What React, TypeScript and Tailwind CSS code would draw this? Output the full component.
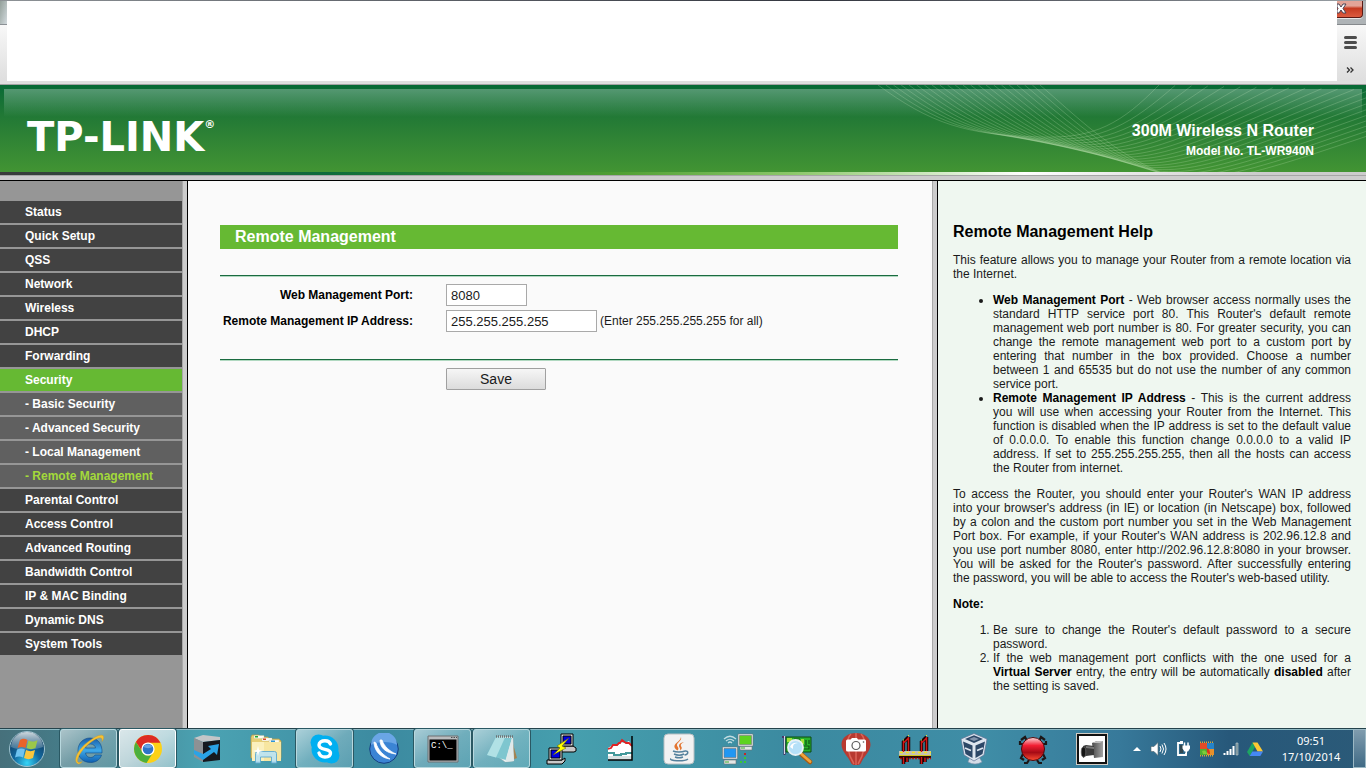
import type { ReactNode } from "react"
import { useState } from "react"
import clsx from "clsx"

interface MenuItem {
  label: string
  sub?: boolean
}

const menu: MenuItem[] = [
  { label: "Status" },
  { label: "Quick Setup" },
  { label: "QSS" },
  { label: "Network" },
  { label: "Wireless" },
  { label: "DHCP" },
  { label: "Forwarding" },
  { label: "Security" },
  { label: "Basic Security", sub: true },
  { label: "Advanced Security", sub: true },
  { label: "Local Management", sub: true },
  { label: "Remote Management", sub: true },
  { label: "Parental Control" },
  { label: "Access Control" },
  { label: "Advanced Routing" },
  { label: "Bandwidth Control" },
  { label: "IP & MAC Binding" },
  { label: "Dynamic DNS" },
  { label: "System Tools" },
]

function BrowserChrome() {
  return (
    <div className="flex h-[85px] shrink-0 flex-col border-b border-[#a3a3a3] bg-[#dfdfdf]">
      <div className="h-px bg-gradient-to-r from-[#8d9296] via-[#33363f] via-60% to-[#9aa0a5]" />
      <div className="flex h-20">
        <div className="flex w-[7px] flex-col">
          <div className="h-6 border-b border-[#8b9095] bg-gradient-to-br from-[#93a09a] to-[#d3dade]" />
          <div className="flex-1 bg-gradient-to-b from-[#f8f8f8] to-[#dedede]" />
        </div>
        <div className="flex-1 bg-white" />
        <div className="flex w-[29px] flex-col">
          <div className="h-6 border-b border-[#85898c] bg-[#aeb3b6] pr-[3px]">
            <button
              type="button"
              aria-label="Close"
              className="block h-[17px] w-full rounded-br border-r border-b border-[#5b1a14] bg-gradient-to-b from-[#e3a497] from-30% via-[#c5391f] via-45% to-[#dc5b3f] shadow-[0_1px_0_#e6e6e6]"
            >
              <svg viewBox="0 0 26 16" className="h-4 w-[26px]">
                <path d="M0 3h2l2 3 2-3h3L6 7.500l3 4.500H6L4 9l-2 3H0V9l1-1.500L0 6z" fill="#fff" stroke="#4a4555" strokeWidth="1" />
              </svg>
            </button>
          </div>
          <div className="flex flex-1 flex-col items-center bg-gradient-to-b from-[#f8f8f8] to-[#dedede] pr-1">
            <button type="button" aria-label="Menu" className="mt-[11px] ml-[2px]">
              <svg viewBox="0 0 13 14" className="h-[14px] w-[13px]">
                <path d="M1.500 1.500h10M1.500 6.500h10M1.500 11.500h10" stroke="#4d4d4d" strokeWidth="3" strokeLinecap="round" />
              </svg>
            </button>
            <button type="button" aria-label="More bookmarks" className="mt-4">
              <svg viewBox="0 0 8 8" className="h-2 w-2">
                <path d="M1 1.500l2.500 2.500L1 6.500M4.500 1.500L7 4 4.500 6.500" fill="none" stroke="#333" strokeWidth="1.300" />
              </svg>
            </button>
          </div>
        </div>
      </div>
    </div>
  )
}

// Ribbon of thin lines behind the model name
function Waves() {
  const count = 22
  const lines = Array.from({ length: count }, (_, i) => {
    const t = i / (count - 1)
    const mix = (a: number, b: number) => Math.round((a + (b - a) * t) * 10) / 10
    return `M${mix(18, 180)} 0C${mix(70, 215)} ${mix(38, 30)} ${mix(105, 250)} ${mix(50, 66)} ${mix(180, 304)} ${mix(52, 89)}C${mix(235, 360)} ${mix(54, 112)} ${mix(262, 450)} ${mix(38, 66)} ${mix(299, 640)} ${mix(0, 8)}`
  })
  return (
    <svg viewBox="0 0 506 87" className="absolute top-0 right-0 h-[87px] w-[506px]" aria-hidden="true">
      {lines.map((d) => (
        <path key={d} d={d} fill="none" stroke="#d5f0c8" strokeOpacity="0.220" strokeWidth="1" />
      ))}
    </svg>
  )
}

function Header() {
  return (
    <header className="shrink-0">
      <div className="relative flex h-[87px] items-center justify-between bg-gradient-to-b from-[#066a35] to-[#429433] pr-[52px] pl-[27px] text-white">
        <div className="absolute inset-x-1 top-1 h-7 bg-gradient-to-b from-white/30 to-transparent" />
        <Waves />
        <div className="relative flex items-start pt-4 font-['DejaVu_Sans'] font-bold">
          <span className="text-[40px] leading-9">TP-LINK</span>
          <span className="text-[11px] leading-3">®</span>
        </div>
        <div className="relative pt-6 text-right font-bold">
          <div className="text-base leading-5">300M Wireless N Router</div>
          <div className="text-xs leading-5">Model No. TL-WR940N</div>
        </div>
      </div>
      <div className="h-[3px] bg-[linear-gradient(90deg,#3a3a3a_0%,#0d6b3a_24%,#4f9e32_45%,#8cc76a_58%,#ffffff_75%,#cccccc_92%)]" />
      <div className="h-[6px] border-t border-b border-t-[#a6a6a6] border-b-black bg-[#cccccc]" />
    </header>
  )
}

function Divider() {
  return <div className="w-[6px] shrink-0 border-r border-l border-r-black border-l-[#a9a9a9] bg-[#cccccc]" />
}

function Sidebar() {
  return (
    <nav className="w-[182px] shrink-0 bg-[#969696] pt-5">
      <ul className="flex flex-col gap-[2px]">
        {menu.map((item) => (
          <li key={item.label}>
            <a
              href="#"
              className={clsx(
                "block h-[22px] pl-[25px] text-xs leading-[22px] font-bold",
                item.label === "Security" ? "bg-[#66b933]" : item.sub ? "bg-[#606060]" : "bg-[#424242]",
                item.label === "Remote Management" ? "text-[#a3d93a]" : "text-white",
              )}
            >
              {item.sub && "- "}
              {item.label}
            </a>
          </li>
        ))}
      </ul>
    </nav>
  )
}

function Rule() {
  return <div className="h-[2px] border-t border-[#1a6b40] bg-[#b0d8c0]" />
}

function RemoteManagement() {
  const [port, setPort] = useState("8080")
  const [ip, setIp] = useState("255.255.255.255")
  const inputClass = "h-[22px] border border-[#a9a9a9] bg-white px-1 text-[13px] leading-4 text-[#1a1a1a] outline-none"

  return (
    <main className="min-w-0 flex-1 bg-[#fafafa] px-8 pt-11">
      <form className="max-w-[678px]" onSubmit={(e) => e.preventDefault()}>
        <h1 className="mb-[26px] h-6 bg-[#66b933] pl-[15px] text-base leading-6 font-bold text-white">Remote Management</h1>
        <Rule />
        <div className="grid grid-cols-[193px_1fr] items-center gap-x-[33px] gap-y-1 pt-[7px] pb-[27px]">
          <label htmlFor="port" className="text-right text-xs font-bold whitespace-nowrap">
            Web Management Port:
          </label>
          <div className="flex">
            <input id="port" className={clsx(inputClass, "w-[81px]")} value={port} onChange={(e) => setPort(e.target.value)} />
          </div>
          <label htmlFor="ip" className="text-right text-xs font-bold whitespace-nowrap">
            Remote Management IP Address:
          </label>
          <div className="flex items-center gap-[3px]">
            <input id="ip" className={clsx(inputClass, "w-[151px]")} value={ip} onChange={(e) => setIp(e.target.value)} />
            <span className="text-xs text-[#1a1a1a]">(Enter 255.255.255.255 for all)</span>
          </div>
        </div>
        <Rule />
        <button
          type="submit"
          className="mt-[7px] ml-[226px] block h-[22px] w-[100px] rounded-[1px] border border-[#a0a0a0] bg-gradient-to-b from-[#f6f6f6] to-[#dcdcdc] text-sm leading-5 text-[#1a1a1a]"
        >
          Save
        </button>
      </form>
    </main>
  )
}

function Help() {
  return (
    <aside className="w-[428px] shrink-0 bg-[#eff7f0] px-[15px] pt-[41px] text-justify text-xs leading-[14px] text-[#1a1a1a]">
      <h2 className="mb-[11px] text-base leading-5 font-bold text-black">Remote Management Help</h2>
      <p className="mb-3">This feature allows you to manage your Router from a remote location via the Internet.</p>
      <ul className="mb-3 list-disc pl-10">
        <li>
          <b className="text-black">Web Management Port</b> - Web browser access normally uses the standard HTTP service port 80. This
          Router's default remote management web port number is 80. For greater security, you can change the remote management web port
          to a custom port by entering that number in the box provided. Choose a number between 1 and 65535 but do not use the number of
          any common service port.
        </li>
        <li>
          <b className="text-black">Remote Management IP Address</b> - This is the current address you will use when accessing your
          Router from the Internet. This function is disabled when the IP address is set to the default value of 0.0.0.0. To enable this
          function change 0.0.0.0 to a valid IP address. If set to 255.255.255.255, then all the hosts can access the Router from
          internet.
        </li>
      </ul>
      <p className="mb-3">
        To access the Router, you should enter your Router's WAN IP address into&nbsp;your browser's address (in IE) or location (in
        Netscape) box, followed by&nbsp;a&nbsp;colon and the custom port number you set in the Web Management Port&nbsp;box. For
        example, if your Router's WAN address is 202.96.12.8 and you&nbsp;use port number 8080, enter http://202.96.12.8:8080 in your
        browser. You&nbsp;will be asked for the Router's password. After successfully entering the&nbsp;password, you will be able to
        access the Router's web-based utility.
      </p>
      <p className="mb-3 font-bold text-black">Note:</p>
      <ol className="list-decimal pl-10">
        <li>Be sure to change the Router's default password to a secure password.</li>
        <li>
          If the web management port conflicts with the one used for a <b className="text-black">Virtual Server</b> entry, the entry
          will be automatically <b className="text-black">disabled</b> after the setting is saved.
        </li>
      </ol>
    </aside>
  )
}

function Icon({ children }: { children: ReactNode }) {
  return (
    <svg viewBox="0 0 32 32" className="size-8" aria-hidden="true">
      {children}
    </svg>
  )
}

function StartOrb() {
  return (
    <svg viewBox="0 0 38 38" className="size-[38px]" aria-hidden="true">
      <defs>
        <radialGradient id="orb" cx="50%" cy="90%" r="85%">
          <stop offset="0" stopColor="#35d5f7" />
          <stop offset="0.450" stopColor="#12689f" />
          <stop offset="1" stopColor="#123656" />
        </radialGradient>
        <linearGradient id="orbShine" x1="0" y1="0" x2="0" y2="1">
          <stop offset="0" stopColor="#eef6f8" stopOpacity="0.850" />
          <stop offset="1" stopColor="#b4cdd8" stopOpacity="0.250" />
        </linearGradient>
      </defs>
      <circle cx="19" cy="19" r="17.500" fill="url(#orb)" stroke="#9fc3cf" strokeWidth="1" />
      <path d="M3 17a16 15 0 0 1 32 0c-7 3-24 4-32 0z" fill="url(#orbShine)" />
      <path d="M12 10c3-2 5-1.500 7.500 0L17.500 18c-2.500-1.500-5-1.500-8 0z" fill="#e8632a" />
      <path d="M20.500 10.500c3 1.500 6 1.500 9-.500l-2 8c-3 1.500-6 1.500-9 0z" fill="#9bc84a" />
      <path d="M9 19.500c3-1.500 5.500-1.500 8 0l-2 8c-2.500-1.500-5-1.500-8 0z" fill="#6fc3f0" />
      <path d="M18 20c3 1.500 6 1.500 9 0l-2 8c-3 1.500-6 1.500-9 0z" fill="#fbc63d" />
    </svg>
  )
}

function IeIcon() {
  return (
    <Icon>
      <defs>
        <linearGradient id="ie" x1="0" y1="0" x2="0" y2="1">
          <stop offset="0" stopColor="#1a5da8" />
          <stop offset="0.500" stopColor="#3fa9e8" />
          <stop offset="1" stopColor="#0f5fb0" />
        </linearGradient>
      </defs>
      <path
        d="M29 20H12.500c.5 3 2.500 4.500 5 4.500 2 0 3.500-.8 4.500-2.500h6.500c-1.500 5-6 7.500-11 7.500C10.500 29.500 5 25 5 17.500 5 10 10.500 5 17 5c8 0 12.500 6 12 15zM12.500 15h10c-.3-2.500-2.300-4-5-4s-4.500 1.500-5 4z"
        fill="url(#ie)"
        stroke="#0d4a86"
        strokeWidth="0.600"
      />
      <path d="M5.500 31C0 29 3 19 13 10.500 21 3.500 29.500 0 30.500 3.500c.4 1.500-.3 3.500-1.500 5 .3-2 0-3.500-1.500-3.700C24 4 14 11 9 18c-4.500 6-6 11.500-3 11.500 1 0 2-.3 3-.8-1 1.300-2.300 2.300-3.500 2.300z" fill="#f7c232" stroke="#d79a17" strokeWidth="0.400" />
    </Icon>
  )
}

function ChromeIcon() {
  return (
    <Icon>
      <circle cx="16" cy="16" r="14" fill="#fcd116" />
      <path d="M3.900 9A14 14 0 0 1 28.500 9.800H16a6.300 6.300 0 0 0-5.700 8.800z" fill="#dd2b24" />
      <path d="M3.900 9A14 14 0 0 0 14.500 29.900l6.300-9.800a6.300 6.300 0 0 1-10.500-1z" fill="#4caf3d" />
      <circle cx="16" cy="16" r="6.600" fill="#fff" />
      <circle cx="16" cy="16" r="5.300" fill="#2f74c8" />
      <path d="M11.500 14a5 5 0 0 1 9 0c-3 1.500-6 1.500-9 0z" fill="#6aa2e2" />
    </Icon>
  )
}

function BoxArrowIcon() {
  return (
    <Icon>
      <path d="M3 5l9-3 17 2v3L12 9z" fill="#c3c6c8" />
      <path d="M3 5l9 4v20L3 24z" fill="#8d9194" />
      <path d="M12 9l17-2v20l-17 2z" fill="#16191f" />
      <path d="M3 17l9 4 8-5-3-3 11-2-2 11-3-3-11 8-9-6z" fill="#2aa3e6" />
    </Icon>
  )
}

function ExplorerIcon() {
  return (
    <Icon>
      <path d="M1 8V4l1-2h7l2 2h7l1 2h10l2 2v17H1z" fill="#e8cf75" stroke="#b89b45" strokeWidth="0.700" />
      <path d="M4 2.500h10v3H4zM12 5h10v3H12zM19 7h10v3H19z" fill="#fdfdf5" stroke="#c7ba8a" strokeWidth="0.300" />
      <path d="M5 3h3v1.500H5z" fill="#22a833" />
      <path d="M13 5.500h3V7h-3z" fill="#d94733" />
      <path d="M21 7.500h4V9h-4z" fill="#2b93d8" />
      <path d="M2 9h29v19H2z" fill="#f7e6a1" />
      <path d="M2 9h12v19H2z" fill="#fbf0bd" />
      <path d="M5.500 30v-9.500q0-2 2-2h17q2 0 2 2V30h-5v-6h-11v6z" fill="#b9e2f3" fillOpacity="0.900" stroke="#5da9cf" strokeWidth="0.900" />
      <path d="M8 13l1 4 4 1-4 1-1 4-1-4-4-1 4-1z" fill="#fff" />
    </Icon>
  )
}

function SkypeIcon() {
  return (
    <Icon>
      <circle cx="16" cy="16" r="13.500" fill="#00aff0" />
      <circle cx="9.500" cy="9.500" r="8" fill="#00aff0" />
      <circle cx="22.500" cy="22.500" r="8" fill="#00aff0" />
      <path d="M21.500 11c-1-2.500-3-3.300-5.500-3.300-3.500 0-6 1.700-6 4.300 0 6 11.500 2.800 11.500 8 0 2.700-2.300 4-5.500 4-3 0-5-1-6-4" fill="none" stroke="#fff" strokeWidth="3.400" strokeLinecap="round" />
    </Icon>
  )
}

function SwooshIcon() {
  return (
    <Icon>
      <circle cx="16" cy="16" r="14.300" fill="#3b84d4" stroke="#153f82" strokeWidth="1" />
      <path d="M3 12a13 13 0 0 1 26 0c-5-4-20-4-26 0z" fill="#6aa6e6" />
      <path d="M6 9c0 8 6 16 16 17-7-4-12-9-14-16zM12 7c0 8 6 13 16 14-7-3-12-8-14-14z" fill="#fff" stroke="#fff" strokeWidth="0.800" />
    </Icon>
  )
}

function CmdIcon() {
  return (
    <Icon>
      <path d="M1 3h30v26H1z" fill="#b9bcbe" stroke="#6c7073" strokeWidth="1" />
      <path d="M24 4.500h1.500M26.500 4.500H28M29 4.500h1" stroke="#4c4f51" />
      <path d="M2.500 6.500h27v21h-27z" fill="#000" />
      <text x="4" y="15" fill="#fff" fontSize="9" fontFamily="Liberation Mono, monospace">
        C:\_
      </text>
    </Icon>
  )
}

function NotepadIcon() {
  return (
    <Icon>
      <path d="M25 4l6 21-5 2z" fill="#a5814b" />
      <path d="M12 3l15 1 1 24-9 1-8-6z" fill="#edf5f5" stroke="#95a9aa" strokeWidth="0.500" />
      <path d="M10 4l16 1-6 22L1 22z" fill="#7ec6cf" />
      <path d="M10 4l9 .600L10 24.500 1 22z" fill="#b1e1e5" />
      <path d="M26 5l2 23-9 1z" fill="#dfe9ea" />
      <path d="M10 3.500h17" stroke="#6b7476" strokeWidth="2.500" strokeDasharray="1 1" />
    </Icon>
  )
}

function PuttyIcon() {
  return (
    <Icon>
      <g stroke="#000" strokeWidth="1">
        <path d="M14 13h14l3 2v3l-2 1H16z" fill="#c9c9c9" />
        <path d="M16 1h12v12H16z" fill="#e0e0e0" />
        <path d="M18 3h8v8h-8z" fill="#0000e0" />
        <path d="M2 27h15l3-2v3l-3 3H2z" fill="#c9c9c9" />
        <path d="M4 15h13v12H4z" fill="#e0e0e0" />
        <path d="M6 17h9v8H6z" fill="#0000e0" />
      </g>
      <path d="M24 5L12 13l3 2-7 7 13-7-4-2z" fill="#ffff00" stroke="#5e5e00" strokeWidth="0.500" />
    </Icon>
  )
}

function ChartIcon() {
  return (
    <Icon>
      <path d="M4 15l5-3 4 1 4-4 4 1 4-2 3 5v14H4z" fill="#fff" />
      <path d="M4 16l3-1 2-3h4l2-2h1l2-3 4 3h3l3 3" fill="none" stroke="#e02222" strokeWidth="1.800" />
      <path d="M4 20h6v2h7v-1h5v-1h6" fill="none" stroke="#43999a" strokeWidth="2" />
      <path d="M4 23h24v4H4z" fill="#d9e2e2" />
      <path d="M28 3v24H4" fill="none" stroke="#000" strokeWidth="1.500" />
    </Icon>
  )
}

function JavaIcon() {
  return (
    <Icon>
      <rect x="1" y="1" width="30" height="30" rx="4" fill="#f2f2f2" stroke="#b7bfc2" />
      <path d="M18 4c1.500 4-6 6-3.500 9.500 1 1.500 1.500 2.500 0 4-4-3-4-5-.5-8 2-1.700 3.500-3 4-5.500zM21 9c-4 2-3.500 3.500-2.500 5 .7 1.300 0 2.500-1.500 3.500 1-2-1-3-1-4.800C16 10.500 18.500 9.500 21 9z" fill="#e3742e" />
      <path d="M10 18c3 1.500 9 1.300 12 0M11 21c3 1.300 7.500 1.300 10 0M12 24c2.500 1 5.500 1 8 0M22 18c4-.500 3.500 3.500-.5 4M8 25.500c-3 2.500 13 3.500 17 .5" fill="none" stroke="#54809c" strokeWidth="1.500" />
    </Icon>
  )
}

function NetworkIcon() {
  return (
    <Icon>
      <g stroke="#6d7476" strokeWidth="0.600">
        <path d="M16 1h15v12H16z" fill="#eef1f1" />
        <path d="M17.500 2.500h12v9h-12z" fill="#5ed320" />
        <path d="M18 13.500h12V17H18z" fill="#e3e6e6" />
        <path d="M0.500 14h15v12h-15z" fill="#eef1f1" />
        <path d="M2 15.500h12v9H2z" fill="#2097f3" />
        <path d="M2 27h12v4H2z" fill="#e3e6e6" />
      </g>
      <path d="M3 29h4M19 15h4" stroke="#3fae2a" />
      <path d="M2 6q6-5.500 12 0M4 8q4-3.500 8 0M6 10q2-2 4 0" fill="none" stroke="#c2dee2" strokeWidth="1.200" />
      <path d="M22 20h2v2h-2z" fill="#c52626" />
      <path d="M22 24h2v2h-2zM22 28h2v2h-2zM18 28h2v2h-2z" fill="#37c837" />
    </Icon>
  )
}

function SearchCardIcon() {
  return (
    <Icon>
      <path d="M1 4h2.500v18" fill="none" stroke="#4a3468" strokeWidth="2" />
      <path d="M3.500 3v18" stroke="#dcd6e6" />
      <path d="M5 4h25v15H5z" fill="#28b32c" stroke="#0d4b13" />
      <path d="M6 5h5v4H6zM20 6h3v5h-3z" fill="#a3e03a" />
      <path d="M13 6h6M25 7v5M28 7v4M22 13h6v3h-5" stroke="#0c5313" fill="none" strokeWidth="1.200" />
      <path d="M20.500 21.500l8.500 7.500" stroke="#a85c12" strokeWidth="4.500" strokeLinecap="round" />
      <path d="M20.500 21l8.500 7.500" stroke="#f0a33c" strokeWidth="2.800" strokeLinecap="round" />
      <circle cx="14.500" cy="14.500" r="7.500" fill="#b5e0f8" stroke="#e8f1f6" strokeWidth="1.800" />
      <path d="M9 14q2-5 8-4-6 0-5 6z" fill="#fff" />
    </Icon>
  )
}

function BalloonIcon() {
  return (
    <Icon>
      <path d="M16 0c8 0 14.500 4.500 14.500 11.500 0 7-7 12-9.500 18.500-1.500 3-8.500 3-10 0C8.500 23.500 1.500 18.500 1.500 11.500 1.500 4.500 8 0 16 0z" fill="#b83a31" />
      <path d="M11 1C4 8 9 23 14 31M21 1c7 7 2 22-3 30M16 0v32" stroke="#da6458" strokeWidth="1.500" fill="none" />
      <path d="M6 8q0-1.500 1.500-1.500h3L12 5h5l1 1.500h6.500Q26 6.500 26 8v9q0 1.500-1.500 1.500h-17Q6 18.500 6 17z" fill="#fff" />
      <circle cx="16" cy="12.500" r="4" fill="#fff" stroke="#5b5b5b" strokeWidth="1.200" />
      <circle cx="23.500" cy="9" r="0.800" fill="#555" />
    </Icon>
  )
}

function BridgeIcon() {
  return (
    <Icon>
      <path d="M0 18h32v4H0z" fill="#c4c2b4" />
      <path d="M1 19.500h31" stroke="#f2e71f" strokeWidth="1.500" strokeDasharray="3 3" />
      <path d="M0 22.500h32" stroke="#d3c91b" strokeWidth="1" />
      <path d="M0 24h32" stroke="#2a0606" strokeWidth="2" />
      <path d="M1 25.500h31" stroke="#b51515" strokeWidth="1.500" strokeDasharray="2 1" />
      <path d="M4.500 9v23M10 4v14M25 4v14M22.500 9v23M27.500 4v14M8 26v4M26 26v4" stroke="none" />
      <path d="M4.500 8v10M9.500 4v14M22.500 8v10M27.500 4v14M4.500 9l5-5M22.500 9l5-5M4.500 24v7M22.500 24v7M8 25v4M26 25v4" stroke="#160202" strokeWidth="3.500" />
      <path d="M4.500 8v11M9.500 4v14M22.500 8v11M27.500 4v14M4.500 10l5-5M22.500 10l5-5M4.500 24v7M22.500 24v7M8 25v4M26 25v4" stroke="#d11717" strokeWidth="1.500" />
      <path d="M4 7h1M9 2.500h1M22 7h1M27 2.500h1" stroke="#f2e71f" />
    </Icon>
  )
}

function VirtualBoxIcon() {
  return (
    <Icon>
      <path d="M12 24h9l3 5q-7 4-14 0z" fill="#d4dce7" stroke="#8494ad" strokeWidth="0.600" />
      <path d="M3 6L16 0.500 29 6l-3 16-10 6-10-6z" fill="#dde5ef" stroke="#5f7395" strokeWidth="0.700" />
      <path d="M7 6l9-3.800L25 6l-9 4zM5 8.500l9.500 4v12.500L7.500 21zM27 8.500l-9.500 4v12.500l7-4z" fill="#2c4767" />
      <path d="M11 6l5-2 5 2-5 2z" fill="#8294ac" />
      <path d="M7 15l6 2.500M19 17.500l6-2.500" stroke="#dde5ef" strokeWidth="1.800" />
    </Icon>
  )
}

function BugIcon() {
  return (
    <Icon>
      <defs>
        <linearGradient id="bug" x1="0" y1="0" x2="0" y2="1">
          <stop offset="0" stopColor="#fbd9da" />
          <stop offset="0.350" stopColor="#f21f33" />
          <stop offset="0.650" stopColor="#a50b15" />
          <stop offset="1" stopColor="#ff4d32" />
        </linearGradient>
      </defs>
      <path d="M10 8L8 4 4 7M22 8l2-4 4 3M6 11H3V8M26 11h3V8M6 21l-2 4 3 2M26 21l2 4-3 2M12 27l-2 3H7M20 27l2 3h3" fill="none" stroke="#1c1717" strokeWidth="2.200" />
      <circle cx="16" cy="16" r="11.500" fill="url(#bug)" stroke="#4d0a0e" strokeWidth="1" />
    </Icon>
  )
}

function CameraIcon() {
  return (
    <Icon>
      <defs>
        <linearGradient id="cam" x1="0" y1="0" x2="1" y2="0">
          <stop offset="0" stopColor="#4c4c4c" />
          <stop offset="1" stopColor="#a2a2a2" />
        </linearGradient>
      </defs>
      <path d="M0 0h32v32H0z" fill="#d2cdc4" />
      <path d="M2 2h28v28H2z" fill="#fff" stroke="#111" strokeWidth="2" />
      <path d="M16 10l5-2h6v16l-9 1z" fill="url(#cam)" />
      <path d="M16 10l5-2h6l-3 2z" fill="#bdbdbd" />
      <path d="M7 13l3-1 8 1v9l-8 1-3 2z" fill="#3b3b3b" />
      <path d="M10 13l8 1v2l-8-1z" fill="#777" />
      <ellipse cx="7.500" cy="19" rx="2.300" ry="5" fill="#151515" stroke="#696969" strokeWidth="0.700" />
    </Icon>
  )
}

const apps = [
  { name: "Internet Explorer", icon: <IeIcon />, state: "open" },
  { name: "Google Chrome", icon: <ChromeIcon />, state: "active" },
  { name: "Transfer", icon: <BoxArrowIcon /> },
  { name: "Windows Explorer", icon: <ExplorerIcon /> },
  { name: "Skype", icon: <SkypeIcon />, state: "open" },
  { name: "WinBox", icon: <SwooshIcon /> },
  { name: "Command Prompt", icon: <CmdIcon />, state: "open" },
  { name: "Notepad", icon: <NotepadIcon />, state: "open" },
  { name: "PuTTY", icon: <PuttyIcon /> },
  { name: "Graph", icon: <ChartIcon /> },
  { name: "Java", icon: <JavaIcon /> },
  { name: "Network tool", icon: <NetworkIcon /> },
  { name: "Adapter scan", icon: <SearchCardIcon /> },
  { name: "Screenshot", icon: <BalloonIcon /> },
  { name: "Bridge", icon: <BridgeIcon /> },
  { name: "VirtualBox", icon: <VirtualBoxIcon /> },
  { name: "Debugger", icon: <BugIcon /> },
  { name: "IP camera", icon: <CameraIcon /> },
]

function Tray() {
  return (
    <div className="flex items-center gap-2" aria-hidden="true">
      <svg viewBox="0 0 8 16" className="h-4 w-2">
        <path d="M0 10l4-4 4 4z" fill="#fff" />
      </svg>
      <svg viewBox="0 0 18 16" className="h-4 w-[18px]">
        <path d="M2 5.500h3l4-4v13l-4-4H2z" fill="#fff" stroke="#51646c" strokeWidth="0.600" />
        <path d="M11 5q2 3 0 6M13 3.500q3 4.500 0 9M15 2q4 6 0 12" fill="none" stroke="#fff" strokeWidth="1" />
      </svg>
      <svg viewBox="0 0 16 16" className="size-4">
        <path d="M8 2H3v12h8v-2M5 1h3" fill="none" stroke="#fff" strokeWidth="1.800" />
        <path d="M5 4h3v8H5z" fill="#31474f" />
        <path d="M9.500 1.500v4M13 1.500v4" stroke="#fff" strokeWidth="1.500" />
        <path d="M7.500 4.500H15v3l-2 3h-1v3h-1.500v-3h-1l-2-3z" fill="#fff" />
      </svg>
      <svg viewBox="0 0 16 16" className="size-4">
        <path d="M1 1.500h14M1 14.500h14" stroke="#d6a93d" strokeWidth="2" strokeDasharray="1 1" />
        <path d="M1 2h7v6H1z" fill="#e24b27" />
        <path d="M8 2h7v6H8z" fill="#2583c9" />
        <path d="M1 8h7v6H1z" fill="#4fae31" />
        <path d="M8 8h7v6H8z" fill="#e8902a" />
        <path d="M8 7q3 1 3 6-4 0-3-6z" fill="#d93320" />
        <path d="M3 10q4-2 5 3H4z" fill="#7dcc3a" />
      </svg>
      <svg viewBox="0 0 16 16" className="size-4">
        <path d="M1.500 14v-2M4.500 14v-4M7.500 14V8M10.500 14V5" stroke="#fff" strokeWidth="2" />
        <path d="M13 2h2v12h-2z" fill="#6d868f" stroke="#c3d0d4" strokeWidth="0.600" />
      </svg>
      <svg viewBox="0 0 16 16" className="size-4">
        <path d="M5.500 1.500L0 11l2.700 4L8 6z" fill="#1da462" />
        <path d="M5.500 1.500h5L16 10.500h-5.500z" fill="#fcc934" />
        <path d="M5.300 10.500H16L13.300 15H2.700z" fill="#4688f4" />
      </svg>
    </div>
  )
}

function Taskbar() {
  return (
    <footer className="flex h-10 shrink-0 items-stretch border-t border-[#24434c] bg-[linear-gradient(90deg,#46707b_0%,#458492_8%,#4ba3b3_15%,#3c8aa0_28%,#469fae_42%,#3b8aa0_58%,#3f8da6_72%,#37799a_82%,#27587a_90%,#2b5a78_100%)] shadow-[inset_0_1px_0_#8ebac4]">
      <button type="button" aria-label="Start" className="flex w-[54px] shrink-0 items-center justify-center">
        <StartOrb />
      </button>
      <div className="ml-[6px] flex shrink-0 gap-[2px]">
        {apps.map((app) => (
          <button
            key={app.name}
            type="button"
            aria-label={app.name}
            className={clsx(
              "flex w-[57px] items-center justify-center rounded-[3px] border",
              !app.state && "border-transparent",
              app.state === "open" && "border-[#b8d8de] bg-gradient-to-br from-white/55 via-white/25 to-white/15 shadow-[0_0_0_1px_#2a5863]",
              app.state === "active" && "border-white bg-gradient-to-br from-white/80 via-white/65 to-white/40 shadow-[0_0_0_1px_#2a5863]",
            )}
          >
            {app.icon}
          </button>
        ))}
      </div>
      <div className="ml-auto flex shrink-0 items-stretch">
        <Tray />
        <time className="flex w-[90px] flex-col justify-center pl-[6px] text-center font-['Noto_Sans','Open_Sans',sans-serif] text-[11px] leading-4 text-white">
          <span>09:51</span>
          <span>17/10/2014</span>
        </time>
        <button
          type="button"
          aria-label="Show desktop"
          className="w-[13px] border border-[#9bb8c4] bg-gradient-to-b from-white/40 to-white/10"
        />
      </div>
    </footer>
  )
}

export default function App() {
  return (
    <div className="flex min-h-screen flex-col font-['Liberation_Sans',Arial,sans-serif] text-black">
      <BrowserChrome />
      <Header />
      <div className="flex flex-1">
        <Sidebar />
        <Divider />
        <RemoteManagement />
        <Divider />
        <Help />
      </div>
      <Taskbar />
    </div>
  )
}
